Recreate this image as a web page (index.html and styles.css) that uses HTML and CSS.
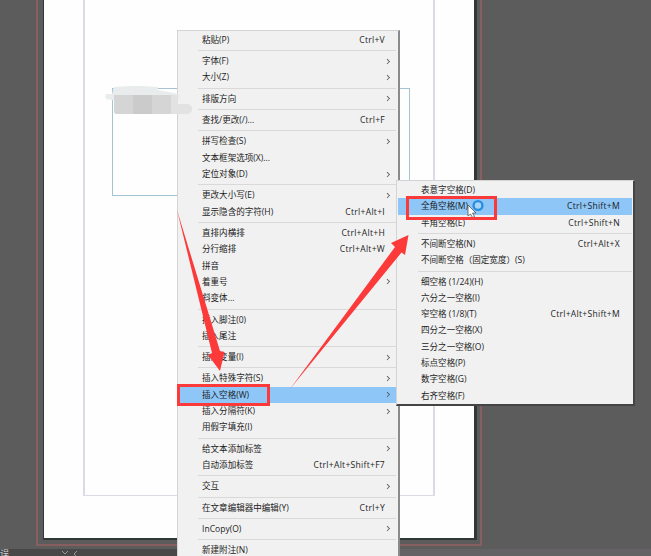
FILE: index.html
```html
<!DOCTYPE html>
<html lang="zh-CN">
<head>
<meta charset="utf-8">
<title>插入空格</title>
<link rel="stylesheet" href="styles.css">
</head>
<body>
<div class="workspace">
  <div class="bleed"></div>
  <div class="page"></div>
  <div class="margins"></div>
  <div class="text-frame"></div>
  <footer class="status"><span>误</span><svg width="20" height="7" viewBox="0 0 20 7"><path d="M2 2l3 3 3-3M17 2l-3 3 3 3"/></svg></footer>

  <ul class="menu main-menu">
    <li><span>粘贴(P)</span><kbd>Ctrl+V</kbd></li>
    <li class="sep"></li>
    <li class="sub"><span>字体(F)</span></li>
    <li class="sub"><span>大小(Z)</span></li>
    <li class="sep"></li>
    <li class="sub"><span>排版方向</span></li>
    <li class="sep"></li>
    <li><span>查找/更改(/)...</span><kbd>Ctrl+F</kbd></li>
    <li class="sep"></li>
    <li class="sub"><span>拼写检查(S)</span></li>
    <li><span>文本框架选项(X)...</span></li>
    <li class="sub"><span>定位对象(D)</span></li>
    <li class="sep"></li>
    <li class="sub"><span>更改大小写(E)</span></li>
    <li><span>显示隐含的字符(H)</span><kbd>Ctrl+Alt+I</kbd></li>
    <li class="sep"></li>
    <li><span>直排内横排</span><kbd>Ctrl+Alt+H</kbd></li>
    <li><span>分行缩排</span><kbd>Ctrl+Alt+W</kbd></li>
    <li class="sub"><span>拼音</span></li>
    <li class="sub"><span>着重号</span></li>
    <li><span>斜变体...</span></li>
    <li class="sep"></li>
    <li><span>插入脚注(0)</span></li>
    <li><span>插入尾注</span></li>
    <li class="sep"></li>
    <li class="sub"><span>插入变量(I)</span></li>
    <li class="sep"></li>
    <li class="sub"><span>插入特殊字符(S)</span></li>
    <li class="sub active"><span>插入空格(W)</span></li>
    <li class="sub"><span>插入分隔符(K)</span></li>
    <li><span>用假字填充(I)</span></li>
    <li class="sep"></li>
    <li class="sub"><span>给文本添加标签</span></li>
    <li><span>自动添加标签</span><kbd>Ctrl+Alt+Shift+F7</kbd></li>
    <li class="sep"></li>
    <li class="sub"><span>交互</span></li>
    <li class="sep"></li>
    <li><span>在文章编辑器中编辑(Y)</span><kbd>Ctrl+Y</kbd></li>
    <li class="sep"></li>
    <li class="sub"><span>InCopy(O)</span></li>
    <li class="sep"></li>
    <li><span>新建附注(N)</span></li>
  </ul>

  <ul class="menu space-menu">
    <li><span>表意字空格(D)</span></li>
    <li class="active"><span>全角空格(M)</span><kbd>Ctrl+Shift+M</kbd></li>
    <li><span>半角空格(E)</span><kbd>Ctrl+Shift+N</kbd></li>
    <li class="sep"></li>
    <li><span>不间断空格(N)</span><kbd>Ctrl+Alt+X</kbd></li>
    <li><span>不间断空格（固定宽度）(S)</span></li>
    <li class="sep"></li>
    <li><span>细空格 (1/24)(H)</span></li>
    <li><span>六分之一空格(I)</span></li>
    <li><span>窄空格 (1/8)(T)</span><kbd>Ctrl+Alt+Shift+M</kbd></li>
    <li><span>四分之一空格(X)</span></li>
    <li><span>三分之一空格(O)</span></li>
    <li><span>标点空格(P)</span></li>
    <li><span>数字空格(G)</span></li>
    <li><span>右齐空格(F)</span></li>
  </ul>

  <svg class="overlay" width="651" height="556" viewBox="0 0 651 556">
    <path fill="#e9eced" d="M114 87q20-2 44 0v3l21 4q2 3-1 6h-66l-6-1q-2-4 1-5h5z"/>
    <path fill="#e2e2e2" d="M114 95h64v9h10q4 1 4 5t-4 5h-71q-3 0-3-3z"/>
    <path fill="#d5d5d5" d="M114 95h57v19h-54q-3 0-3-3z"/>
    <path fill="#cbcbcb" d="M133 95h19v19h-19z"/>
    <circle cx="478" cy="205.500" r="4.400" fill="#a9d3f7" stroke="#2a8ee0" stroke-width="2.400"/>
    <path fill="#fff" stroke="#555" stroke-width=".8" d="M468 205v11l2.500-2 2 3.500 2-1-2-3.500h3.500z"/>
    <g fill="#fc3a3a">
      <path d="M177 210L220 351l4.500 1-4.500 19-12-16 4-2z"/>
      <path d="M290 389L395 247l-4-4 17.500-8-3.500 20-3.500-2.500z"/>
    </g>
    <g fill="none" stroke="#fc3a3a" stroke-width="3">
      <path d="M178.500 385.500h90v19h-90z"/>
      <path d="M407.500 197.500h88v21h-88z"/>
    </g>
  </svg>
</div>
</body>
</html>
```
FILE: styles.css
```css
* { box-sizing: border-box; }
body { margin: 0; }
.workspace {
  position: relative;
  width: 651px;
  height: 556px;
  overflow: hidden;
  background: #5c5c5c;
  font: 8.55px/16.3px "Open Sans", "Noto Sans CJK SC", sans-serif;
  color: #1c1c1c;
}
.bleed {
  position: absolute;
  left: 36px;
  top: -2px;
  width: 446px;
  height: 548px;
  border: 2px solid #875f61;
}
.page {
  position: absolute;
  left: 43px;
  top: 0;
  width: 434px;
  height: 540px;
  background: #fefefe;
  border: solid #303838;
  border-width: 0 3px 2px 1px;
}
.margins {
  position: absolute;
  left: 83px;
  top: -2px;
  width: 352px;
  height: 498px;
  border: solid #dcdae6;
  border-width: 0 2px 1px;
}
.text-frame {
  position: absolute;
  left: 112px;
  top: 88px;
  width: 298px;
  height: 108px;
  border: 1px solid #a5c4d3;
}
.status {
  position: absolute;
  left: 0;
  top: 549px;
  width: 651px;
  height: 7px;
  display: flex;
  gap: 51px;
  background: linear-gradient(90deg, #484848 0 400px, #656265 400px);
  color: #d8d8d8;
  font-size: 9px;
  line-height: 9px;
}
.status svg { fill: none; stroke: #999; }
.menu {
  position: absolute;
  margin: 0;
  list-style: none;
  background: #f1f1f1;
  border: 1px solid #d4d4d4;
}
.main-menu {
  left: 177px;
  top: 30px;
  width: 223px;
  height: 540px;
  padding: .85px 2px 0 0;
  border-right: 2px solid #8a8a8a;
}
.space-menu {
  left: 396px;
  top: 180px;
  width: 239px;
  height: 226px;
  padding: 1px 1px 0;
  border-right: 2px solid #444;
  border-bottom: 2px solid #444;
}
.menu li {
  display: flex;
  justify-content: space-between;
  height: 16.3px;
  padding: 0 11px 0 24px;
  white-space: nowrap;
}
.space-menu li { padding: 0 12px 0 23px; }
.menu li.sep {
  height: 1px;
  margin: 2.03px 0 2.03px 20px;
  padding: 0;
  background: #d9d9d9;
}
.menu li.active { background: #8ec6f8; }
.menu li.sub::after {
  content: "";
  width: 3.5px;
  height: 3.5px;
  margin: 5.5px -4px 0 0;
  border: solid #555;
  border-width: 1px 1px 0 0;
  transform: rotate(45deg) scale(.75);
}
kbd { font: inherit; letter-spacing: .28px; }
.overlay { position: absolute; left: 0; top: 0; }
```
